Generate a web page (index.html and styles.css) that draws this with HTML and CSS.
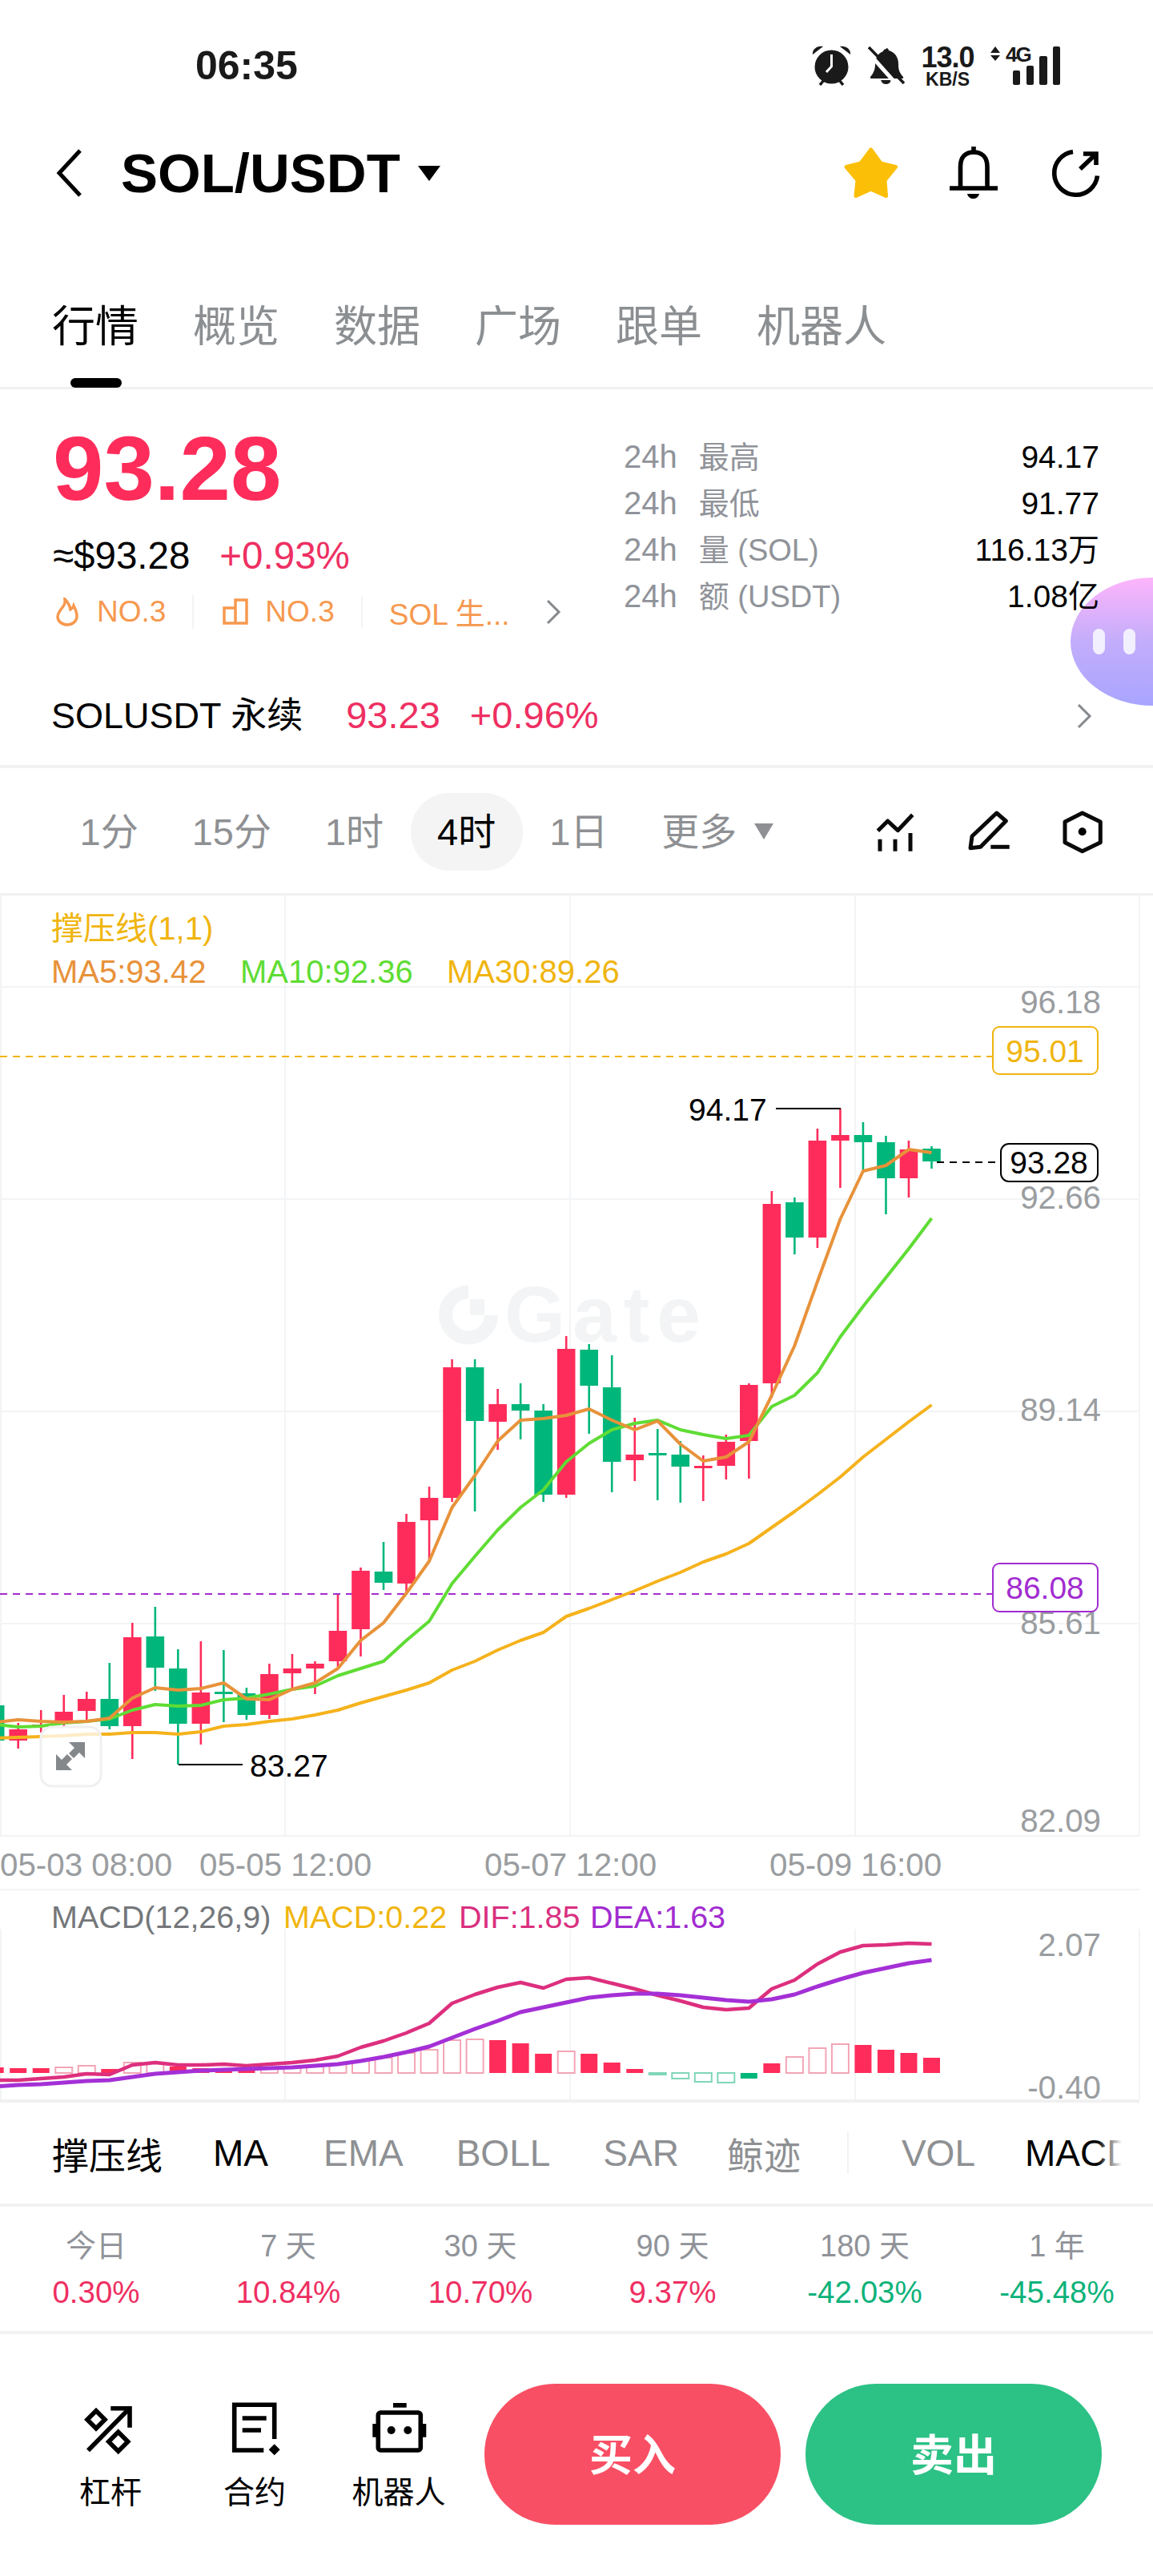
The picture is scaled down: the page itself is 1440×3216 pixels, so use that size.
FILE: index.html
```html
<!DOCTYPE html>
<html lang="zh-CN">
<head>
  <meta charset="UTF-8">
  <title>SOL/USDT</title>
  <link rel="stylesheet" href="styles.css">
</head>
<body>
  <div class="status">
    <span class="clock">06:35</span>
    <div class="status-icons">
      <svg width="52" height="50" viewBox="0 0 52 50" class="ink">
        <path d="M1 11 C0 5 6 0 14 1 Z M48 11 C49 5 43 0 35 1 Z"/>
        <circle cx="24.5" cy="26.5" r="21"/>
        <path class="ic-stroke" d="M10 49 L15 43 M39 49 L34 43"/>
        <path class="ic-white" d="M24.5 11 V26 L18 33"/>
      </svg>
      <svg width="46" height="50" viewBox="0 0 46 50" class="ink">
        <path d="M23 3 c1.5 0 3 1.5 3 3 c8 2 12 9 12 17 c0 7 1 10 6 16 c.5 1 0 2 -1 2 H4 c-1 0-1.5-1-1-2 c4-5 6-9 6-16 c0-7 3-13 10-16 c0-1.5 2-3 4-3 Z"/>
        <path d="M16 43 h13 c-1 3-3 5-6.5 5 s-5.500-2-6.500-5Z"/>
        <path class="ic-gap" d="M-2 6 L40 53"/>
        <path class="ic-stroke" d="M1 2 L45 47"/>
      </svg>
      <div class="speed"><b>13.0</b><span>KB/S</span></div>
      <svg class="net ink" width="88" height="50" viewBox="0 0 88 50">
        <path d="M6 1 l6 8 H0Z M6 19 l6-7 H0Z"/>
        <text x="19" y="20" class="net-text">4G</text>
        <rect x="28" y="31" width="9" height="18" rx="2"/>
        <rect x="45" y="25" width="9" height="24" rx="2"/>
        <rect x="61" y="13" width="10" height="36" rx="2"/>
        <rect x="78" y="1" width="9" height="48" rx="2"/>
      </svg>
    </div>
  </div>

  <div class="header">
    <svg class="back" width="36" height="60" viewBox="0 0 36 60"><path d="M31 2 L5 30 L31 58"/></svg>
    <h1>SOL/USDT</h1>
    <span class="caret"></span>
    <div class="header-icons">
      <svg width="70" height="66" viewBox="0 0 70 66"><path class="star" d="M34.700 4 L47 21 L65.500 25.500 L52 42 L53.500 61.500 L34.700 53 L16 61.500 L18 42 L4 25.500 L22 21 Z"/></svg>
      <svg width="66" height="68" viewBox="0 0 66 68">
        <path class="line" d="M14.500 51 V26 C14.500 14 21 8 31 8 C41 8 48 14 48 26 V51"/>
        <path class="line" d="M1 53 H61 M31 1 V8"/>
        <path d="M23 60 H38 C37 64 34 66 30.500 66 C27 66 24 64 23 60 Z"/>
      </svg>
      <svg width="62" height="64" viewBox="0 0 62 64">
        <path class="line" d="M27 5.500 A27 27 0 1 0 57.500 35.500"/>
        <path class="line" d="M40 8 H56 V22 M56 8 L36 27"/>
      </svg>
    </div>
  </div>

  <div class="tabs">
    <span class="tab active">行情</span>
    <span class="tab">概览</span>
    <span class="tab">数据</span>
    <span class="tab">广场</span>
    <span class="tab">跟单</span>
    <span class="tab">机器人</span>
  </div>

  <div class="quote">
    <div class="quote-left">
      <div class="last">93.28</div>
      <div class="fiat"><span>≈$93.28</span><span class="red">+0.93%</span></div>
      <div class="tags">
        <div class="tag">
          <svg width="28" height="36" viewBox="0 0 28 36"><path d="M11 2 C12 8 9 11 6 15 C3 19 2 21 2 24 C2 30 8 34 14 34 C20 34 26 30 26 23 C26 18 24 14 22 10 C21 13 20 14 18 15 C17 10 14 5 11 2 Z"/></svg>
          <span>NO.3</span>
        </div>
        <div class="tag tag-rank">
          <svg width="32" height="36" viewBox="0 0 32 36"><path d="M2 13 H16 V32 H2 Z M16 32 H30 V3 H16 V13"/></svg>
          <span>NO.3</span>
        </div>
        <div class="tag tag-last"><span>SOL 生...</span></div>
        <svg class="chev" width="20" height="32" viewBox="0 0 20 32"><path d="M3 2 L17 16 L3 30"/></svg>
      </div>
    </div>
    <div class="stats">
      <div class="stat"><span><em>24h</em>最高</span><b>94.17</b></div>
      <div class="stat"><span><em>24h</em>最低</span><b>91.77</b></div>
      <div class="stat"><span><em>24h</em>量 (SOL)</span><b>116.13万</b></div>
      <div class="stat"><span><em>24h</em>额 (USDT)</span><b>1.08亿</b></div>
    </div>
    <div class="assistant"><i></i><i></i></div>
  </div>

  <div class="perp">
    <span class="perp-name">SOLUSDT 永续</span>
    <span class="red perp-price">93.23</span>
    <span class="red perp-change">+0.96%</span>
    <svg class="chev" width="20" height="32" viewBox="0 0 20 32"><path d="M3 2 L17 16 L3 30"/></svg>
  </div>

  <div class="periods">
    <span class="period">1分</span>
    <span class="period">15分</span>
    <span class="period">1时</span>
    <span class="period on">4时</span>
    <span class="period">1日</span>
    <span class="period more">更多<i class="caret grey"></i></span>
    <div class="tools">
      <svg width="60" height="60" viewBox="0 0 60 60">
        <path class="thin" d="M8.300 29.300 L20.700 17 L33.300 28.700 L51.700 9.300"/>
        <path class="thin" d="M11 39.700 V54.700 M30 39.700 V54.700 M49 32 V54.700"/>
      </svg>
      <svg width="60" height="60" viewBox="0 0 60 60">
        <path class="thin" d="M39.700 7 L51.300 17 L19.700 49.300 L7 50.700 L9 36 Z"/>
        <path class="thin" d="M32.300 49.300 H55.700"/>
      </svg>
      <svg width="60" height="60" viewBox="0 0 60 60">
        <path class="thin" d="M29.700 7 L52.300 18 V43.700 L29.700 54.700 L8 43.700 V18 Z"/>
        <circle cx="29.700" cy="30.300" r="5"/>
      </svg>
    </div>
  </div>

  <svg class="chart" width="1440" height="1507" viewBox="0 1118 1440 1507">
    <path class="grid" d="M1 1118 V2292 M356 1118 V2292 M712 1118 V2292 M1068 1118 V2292 M1423 1118 V2292 M0 1232 H1423 M0 1497 H1423 M0 1762 H1423 M0 2027 H1423 M0 2292 H1423"/>
    <path class="grid" d="M1 2408 V2622 M356 2408 V2622 M712 2408 V2622 M1068 2408 V2622 M1423 2408 V2622 M0 2359 H1423"/>
    <path class="grid-bold" d="M0 2623 H1423"/>

    <path class="mark-ring" d="M585 1613 A28.500 28.500 0 1 0 613.500 1642"/>
    <rect class="mark-square" x="587" y="1622" width="18" height="20"/>
    <text class="mark" x="630" y="1675">Gate</text>

    <path class="dash-yellow" d="M0 1319 H1240"/>
    <path class="dash-purple" d="M0 1990 H1240"/>

    <g id="candles"></g>
    <g id="lines"></g>
    <g id="bars"></g>

    <text class="lbl yellow" x="64" y="1173">撑压线(1,1)</text>
    <text class="lbl orange" x="64" y="1227">MA5:93.42</text>
    <text class="lbl green-ma" x="300" y="1227">MA10:92.36</text>
    <text class="lbl yellow" x="558" y="1227">MA30:89.26</text>

    <text class="lbl axis end" x="1375" y="1265">96.18</text>
    <text class="lbl axis end" x="1375" y="1509">92.66</text>
    <text class="lbl axis end" x="1375" y="1774">89.14</text>
    <text class="lbl axis end" x="1375" y="2040">85.61</text>
    <text class="lbl axis end" x="1375" y="2287">82.09</text>

    <rect class="box-yellow" x="1240" y="1282" width="131" height="59" rx="8"/>
    <text class="lbl tip yellow mid" x="1305" y="1326">95.01</text>

    <rect class="box-purple" x="1240" y="1952" width="131" height="60" rx="8"/>
    <text class="lbl tip purple mid" x="1305" y="1996">86.08</text>

    <path class="dash-black" d="M1170 1451 H1248"/>
    <rect class="box-black" x="1250" y="1428" width="121" height="47" rx="10"/>
    <text class="lbl tip mid" x="1310" y="1465">93.28</text>

    <path class="leader" d="M969 1384 H1050"/>
    <text class="lbl tip" x="860" y="1399">94.17</text>
    <path class="leader" d="M223 2203 H303"/>
    <text class="lbl tip" x="312" y="2218">83.27</text>

    <rect class="expand" x="51" y="2156" width="75" height="74" rx="14"/>
    <path class="expand-arrow" d="M70 2210 V2190 L77 2197 L84 2190 L90 2196 L83 2203 L90 2210 Z M106 2175 V2195 L99 2188 L92 2195 L86 2189 L93 2182 L86 2175 Z"/>

    <text class="lbl axis" x="0" y="2342">05-03 08:00</text>
    <text class="lbl axis" x="249" y="2342">05-05 12:00</text>
    <text class="lbl axis" x="605" y="2342">05-07 12:00</text>
    <text class="lbl axis" x="961" y="2342">05-09 16:00</text>

    <text class="lbl small macd-name" x="64" y="2407">MACD(12,26,9)</text>
    <text class="lbl small yellow" x="354" y="2407">MACD:0.22</text>
    <text class="lbl small pink" x="573" y="2407">DIF:1.85</text>
    <text class="lbl small purple" x="737" y="2407">DEA:1.63</text>
    <text class="lbl axis end" x="1375" y="2442">2.07</text>
    <text class="lbl axis end" x="1375" y="2620">-0.40</text>
  </svg>

  <div class="indicators">
    <span class="on">撑压线</span>
    <span class="on ma-tab">MA</span>
    <span>EMA</span>
    <span>BOLL</span>
    <span class="sar-tab">SAR</span>
    <span>鲸迹</span>
    <i class="sep"></i>
    <span>VOL</span>
    <span class="on macd-tab">MACD</span>
  </div>

  <div class="returns">
    <div class="ret"><span>今日</span><b class="red">0.30%</b></div>
    <div class="ret"><span>7 天</span><b class="red">10.84%</b></div>
    <div class="ret"><span>30 天</span><b class="red">10.70%</b></div>
    <div class="ret"><span>90 天</span><b class="red">9.37%</b></div>
    <div class="ret"><span>180 天</span><b class="green">-42.03%</b></div>
    <div class="ret"><span>1 年</span><b class="green">-45.48%</b></div>
  </div>

  <div class="actions">
    <div class="act">
      <svg width="70" height="70" viewBox="0 0 70 70">
        <path class="line" d="M7 61.300 L58.700 8.700"/>
        <path class="line" d="M35.300 8.700 H59 V32.700"/>
        <path class="line" d="M17 11.700 L28 22.700 L17 33.700 L6 22.700 Z M44.700 38.300 L56.700 50.300 L44.700 62.300 L32.700 50.300 Z"/>
      </svg>
      <span>杠杆</span>
    </div>
    <div class="act">
      <svg width="70" height="70" viewBox="0 0 70 70">
        <path class="line" d="M59.700 47 V4.300 H9.700 V61 H46.300"/>
        <path class="line" d="M19.700 21 H49.700 M19.700 36 H43"/>
        <path d="M59.700 53.300 L66.700 60.300 L59.700 67.300 L52.700 60.300 Z"/>
      </svg>
      <span>合约</span>
    </div>
    <div class="act">
      <svg width="70" height="70" viewBox="0 0 70 70">
        <rect x="28" y="2" width="16.700" height="5.700"/>
        <rect class="line" x="9.300" y="14" width="53" height="47" rx="3"/>
        <rect x="2.300" y="28" width="5" height="16.700"/>
        <rect x="64.300" y="28" width="5" height="16.700"/>
        <circle cx="25.700" cy="36" r="5"/>
        <circle cx="46.300" cy="36" r="5"/>
      </svg>
      <span>机器人</span>
    </div>
    <button class="trade buy">买入</button>
    <button class="trade sell">卖出</button>
  </div>

  <script src="chart.js"></script>
</body>
</html>
```

FILE: styles.css
```css
* {
  box-sizing: border-box;
}

body {
  margin: 0;
  width: 1440px;
  height: 3216px;
  overflow: hidden;
  background: #fff;
  color: #000;
  font-family: "Liberation Sans", "Noto Sans CJK SC", sans-serif;
}

.red { color: #ee2f62; }
.green { color: #0db27a; }

svg .line {
  fill: none;
  stroke: #000;
  stroke-width: 5.6;
}

svg .thin {
  fill: none;
  stroke: #0a0a0a;
  stroke-width: 5;
  stroke-linejoin: round;
}

/* status bar */
.status {
  height: 164px;
  display: flex;
  align-items: center;
  justify-content: space-between;
  padding: 0 115px 0 244px;
}

.clock {
  font-size: 50px;
  font-weight: 700;
  color: #1a1a1a;
}

.status-icons {
  display: flex;
  align-items: center;
  gap: 18px;
}

.ink { fill: #1a1a1a; }

.net { overflow: visible; }

.ic-stroke {
  fill: none;
  stroke: #1a1a1a;
  stroke-width: 3.5;
}

.ic-white {
  fill: none;
  stroke: #fff;
  stroke-width: 3;
}

.ic-gap {
  fill: none;
  stroke: #fff;
  stroke-width: 5;
}

.speed {
  display: flex;
  flex-direction: column;
  align-items: center;
  width: 71px;
  font-weight: 700;
  line-height: 1;
  color: #1a1a1a;
}

.speed b { font-size: 36px; letter-spacing: -1px; }
.speed span { font-size: 23px; margin-top: -2px; }

.net-text {
  font-size: 26px;
  font-weight: 700;
  letter-spacing: -2px;
}

/* header */
.header {
  height: 104px;
  display: flex;
  align-items: center;
  padding-left: 69px;
}

.back path {
  fill: none;
  stroke: #000;
  stroke-width: 5;
}

.header h1 {
  margin: 0 0 0 46px;
  font-size: 69px;
  font-weight: 700;
}

.caret {
  display: inline-block;
  margin-left: 22px;
  border-left: 14px solid transparent;
  border-right: 14px solid transparent;
  border-top: 19px solid #000;
}

.caret.grey {
  margin-left: 22px;
  border-left-width: 12px;
  border-right-width: 12px;
  border-top: 20px solid #8e9093;
  vertical-align: 7px;
}

.header-icons {
  margin-left: auto;
  padding-right: 65px;
  display: flex;
  align-items: center;
  gap: 62px;
}

.star {
  fill: #fbbf07;
  stroke: #fbbf07;
  stroke-width: 5;
  stroke-linejoin: round;
}

/* tabs */
.tabs {
  height: 218px;
  padding: 104px 0 0 65px;
  display: flex;
  gap: 68px;
  border-bottom: 3px solid #f1f1f2;
}

.tab {
  position: relative;
  font-size: 54px;
  line-height: 72px;
  color: #8c8f92;
}

.tab.active {
  color: #000;
}

.tab.active::after {
  content: "";
  position: absolute;
  left: 23px;
  top: 100px;
  width: 64px;
  height: 12px;
  border-radius: 6px;
  background: #000;
}

/* quote */
.quote {
  position: relative;
  height: 357px;
  display: flex;
}

.quote-left {
  width: 779px;
  padding: 39px 0 0 66px;
}

.last {
  font-size: 114px;
  font-weight: 700;
  line-height: 120px;
  color: #fe2c5a;
}

.fiat {
  margin-top: 19px;
  display: flex;
  gap: 37px;
  font-size: 47.500px;
  line-height: 60px;
}

.tags {
  margin-top: 15px;
  height: 50px;
  padding-left: 4px;
  display: flex;
  align-items: center;
  font-size: 37px;
  color: #f6994f;
}

.tag {
  display: flex;
  align-items: center;
  gap: 23px;
  padding-right: 33px;
  margin-right: 36px;
  border-right: 2px solid #f4f4f4;
}

.tag-rank {
  gap: 21px;
  margin-right: 33px;
}

.tag-last {
  border-right: 0;
  margin-right: 0;
  padding-right: 44px;
}

.tag svg path {
  fill: none;
  stroke: #f6994f;
  stroke-width: 3.5;
}

.chev path {
  fill: none;
  stroke: #85888c;
  stroke-width: 3;
}

.stats {
  position: relative;
  z-index: 1;
  width: 594px;
  padding-top: 55px;
}

.stat {
  height: 58px;
  display: flex;
  justify-content: space-between;
  align-items: baseline;
  font-size: 38px;
  line-height: 58px;
  color: #909399;
}

.stat em {
  margin-right: 27px;
  font-size: 40px;
  font-style: normal;
}

.stat b {
  font-size: 39px;
  font-weight: 400;
  color: #000;
}

.assistant {
  position: absolute;
  right: 0;
  top: 235px;
  width: 103px;
  height: 160px;
  padding-left: 28px;
  display: flex;
  align-items: center;
  gap: 23px;
  border-radius: 100% 0 0 100% / 50% 0 0 50%;
  background: linear-gradient(180deg, #fdb5fb 0%, #c3adfb 50%, #a8a5ff 100%);
}

.assistant i {
  width: 15px;
  height: 32px;
  border-radius: 8px;
  background: #f2efff;
}

/* perpetual row */
.perp {
  height: 116px;
  padding: 20px 76px 0 64px;
  display: flex;
  align-items: baseline;
  font-size: 45px;
  line-height: 60px;
  border-bottom: 4px solid #f2f2f3;
}

.perp-name { margin-right: 54px; }

.perp-price {
  margin-right: 37px;
  font-size: 47px;
}

.perp-change { font-size: 47px; }

.perp .chev {
  margin-left: auto;
  align-self: flex-start;
  margin-top: 15px;
}

/* period selector */
.periods {
  height: 159px;
  padding: 2px 58px 0 66px;
  display: flex;
  align-items: center;
  border-bottom: 3px solid #f1f1f2;
  font-size: 47px;
  color: #8e9093;
}

.period {
  height: 97px;
  padding: 0 33.500px;
  line-height: 97px;
}

.period.on {
  color: #000;
  background: #f4f4f5;
  border-radius: 48px;
}

.tools {
  margin-left: auto;
  display: flex;
  gap: 57px;
}

/* chart */
.chart {
  display: block;
  overflow: visible;
}

.grid {
  fill: none;
  stroke: #f3f4f5;
  stroke-width: 2;
}

.grid-bold {
  fill: none;
  stroke: #f1f1f2;
  stroke-width: 4;
}

.mark {
  font-size: 98px;
  font-weight: 700;
  letter-spacing: 9px;
  fill: #f3f4f5;
}

.mark-ring {
  fill: none;
  stroke: #f3f4f5;
  stroke-width: 17;
}

.mark-square { fill: #f3f4f5; }

.lbl {
  font-size: 40px;
  fill: #000;
}

.lbl.tip { font-size: 39px; }
.lbl.small { font-size: 39.500px; }
.lbl.end { text-anchor: end; }
.lbl.mid { text-anchor: middle; }
.lbl.axis { fill: #9a9da0; font-size: 40.300px; }
.lbl.yellow { fill: #f0b50f; }
.lbl.orange { fill: #e8923a; }
.lbl.green-ma { fill: #5fdc34; }
.lbl.pink { fill: #d9307f; }
.lbl.purple { fill: #a22cd0; }
.lbl.macd-name { fill: #74777a; }

.dash-yellow,
.dash-purple,
.dash-black {
  fill: none;
  stroke-width: 2;
  stroke-dasharray: 9 7;
}

.dash-yellow { stroke: #f0b50f; }
.dash-purple { stroke: #a22cd0; }
.dash-black { stroke: #000; }

.box-yellow,
.box-purple,
.box-black {
  fill: #fff;
  stroke-width: 2;
}

.box-yellow { stroke: #f0b50f; }
.box-purple { stroke: #a22cd0; }
.box-black { stroke: #000; }

.leader {
  fill: none;
  stroke: #000;
  stroke-width: 2;
}

.expand {
  fill: rgba(255, 255, 255, 0.75);
  stroke: #f0f0f1;
  stroke-width: 3;
}

.expand-arrow {
  fill: #85888b;
}

.up { fill: #fe2c5a; }
.down { fill: #00b67a; }
.wick-up { stroke: #fe2c5a; stroke-width: 2.6; }
.wick-down { stroke: #00b67a; stroke-width: 2.6; }

.ma {
  fill: none;
  stroke-width: 4;
  stroke-linejoin: round;
}

.ma5 { stroke: #e8923a; }
.ma10 { stroke: #5fdc34; }
.ma30 { stroke: #f5b21c; }
.dif { stroke: #dd2f7e; stroke-width: 4.5; }
.dea { stroke: #a430d6; stroke-width: 5; }

.hollow-up { fill: #fff; stroke: #f3a5b6; stroke-width: 2; }
.hollow-down { fill: #fff; stroke: #7fd6b8; stroke-width: 2; }

/* indicator tabs */
.indicators {
  position: relative;
  height: 130px;
  padding-left: 65px;
  display: flex;
  align-items: center;
  gap: 66px;
  overflow: hidden;
  white-space: nowrap;
  font-size: 46px;
  color: #8e9093;
  border-bottom: 4px solid #f2f2f3;
}

.indicators .on { color: #000; }
.indicators .ma-tab { margin: 0 3px 0 -3px; }
.indicators .sar-tab { margin-right: -6px; }
.indicators .macd-tab { margin-left: -4px; }

.indicators .sep {
  width: 2px;
  height: 52px;
  margin-left: -8px;
  background: #f2f2f3;
}

.indicators::after {
  content: "";
  position: absolute;
  right: 0;
  top: 0;
  bottom: 0;
  width: 70px;
  background: linear-gradient(90deg, rgba(255, 255, 255, 0) 0, #fff 45%);
}

/* returns */
.returns {
  height: 159px;
  padding-top: 24px;
  display: grid;
  grid-template-columns: repeat(6, 1fr);
  border-bottom: 4px solid #f2f2f3;
}

.ret {
  display: flex;
  flex-direction: column;
  align-items: center;
  font-size: 38px;
  line-height: 50px;
  color: #909399;
}

.ret b {
  margin-top: 8px;
  font-size: 38.500px;
  font-weight: 400;
}

.ret b.red { color: #ee2f62; }
.ret b.green { color: #0db27a; }

/* bottom actions */
.actions {
  padding: 62px 0 0 48px;
  display: flex;
  align-items: flex-start;
}

.act {
  width: 180px;
  margin-top: 22px;
  display: flex;
  flex-direction: column;
  align-items: center;
  font-size: 39px;
  line-height: 50px;
}

.act svg { margin-bottom: 19px; }

.trade {
  width: 370px;
  height: 176px;
  padding: 0 0 6px;
  border: 0;
  border-radius: 88px;
  color: #fff;
  font-family: inherit;
  font-size: 54px;
  font-weight: 700;
}

.buy {
  margin-left: 17px;
  background: #f94f64;
}

.sell {
  margin-left: 31px;
  background: #2cc185;
}
```

FILE: chart.js
```js
const svgNS = 'http://www.w3.org/2000/svg';

// newest candle first: [wick top, body top, body bottom, wick bottom, up?] in chart px
const candles = [
  [1431, 1434, 1450, 1459, 0], [1424, 1435, 1471, 1495, 1], [1418, 1426, 1471, 1516, 0],
  [1401, 1417, 1426, 1464, 0], [1384, 1417, 1424, 1483, 1], [1409, 1424, 1545, 1558, 1],
  [1495, 1501, 1545, 1566, 0], [1487, 1503, 1727, 1745, 1], [1727, 1729, 1799, 1846, 1],
  [1791, 1800, 1830, 1847, 1], [1817, 1830, 1833, 1874, 1], [1799, 1816, 1831, 1876, 0],
  [1784, 1814, 1816, 1873, 0], [1770, 1816, 1823, 1849, 1], [1692, 1732, 1825, 1863, 0],
  [1678, 1685, 1730, 1790, 0], [1668, 1684, 1866, 1870, 1], [1753, 1761, 1866, 1875, 0],
  [1727, 1753, 1761, 1797, 0], [1734, 1753, 1775, 1810, 1], [1697, 1707, 1774, 1887, 0],
  [1697, 1707, 1870, 1875, 1], [1856, 1870, 1898, 1949, 1], [1890, 1900, 1977, 1991, 1],
  [1925, 1962, 1976, 1985, 0], [1957, 1961, 2034, 2068, 1], [1991, 2036, 2074, 2081, 1],
  [2074, 2077, 2083, 2115, 1], [2065, 2083, 2089, 2111, 1], [2077, 2090, 2141, 2146, 1],
  [2107, 2114, 2141, 2147, 0], [2060, 2112, 2114, 2150, 0], [2049, 2113, 2152, 2178, 1],
  [2059, 2083, 2152, 2203, 0], [2006, 2043, 2082, 2111, 0], [2026, 2044, 2155, 2196, 1],
  [2076, 2121, 2155, 2159, 0], [2112, 2121, 2136, 2151, 1], [2116, 2137, 2151, 2155, 1],
  [2135, 2153, 2155, 2163, 1], [2151, 2159, 2173, 2183, 1], [2129, 2129, 2173, 2173, 0]
];

const ma5 = [1439, 1435, 1455, 1462, 1522, 1600, 1680, 1742, 1800, 1819, 1824, 1803, 1774, 1785, 1773, 1759,
  1767, 1771, 1773, 1799, 1842, 1882, 1949, 1989, 2026, 2048, 2083, 2101, 2109, 2122, 2121, 2101, 2108, 2110,
  2107, 2120, 2145, 2149, 2150, 2149, 2147, 2150];
const ma10 = [1521, 1559, 1595, 1631, 1669, 1714, 1742, 1756, 1792, 1796, 1791, 1785, 1773, 1777, 1785, 1802,
  1825, 1860, 1882, 1910, 1943, 1977, 2024, 2048, 2074, 2083, 2092, 2105, 2109, 2115, 2120, 2122, 2129, 2130,
  2128, 2135, 2146, 2149, 2151, 2155, 2156, 2153];
const ma30 = [1754, 1775, 1797, 1819, 1844, 1866, 1887, 1907, 1927, 1940, 1950, 1963, 1974, 1986, 1997, 2008,
  2018, 2038, 2048, 2060, 2074, 2085, 2101, 2110, 2118, 2126, 2135, 2141, 2146, 2149, 2153, 2155, 2162, 2165,
  2163, 2163, 2165, 2165, 2167, 2168, 2169, 2170];
const dif = [2427, 2426, 2428, 2429, 2437, 2452, 2472, 2483, 2507, 2509, 2506, 2498, 2491, 2483, 2476, 2469,
  2471, 2482, 2475, 2481, 2490, 2501, 2526, 2538, 2548, 2556, 2567, 2572, 2575, 2577, 2579, 2577, 2578, 2578,
  2575, 2578, 2590, 2589, 2593, 2595, 2597, 2597];
const dea = [2447, 2451, 2457, 2463, 2471, 2480, 2490, 2496, 2499, 2497, 2494, 2491, 2489, 2489, 2491, 2494,
  2500, 2506, 2512, 2523, 2533, 2544, 2555, 2562, 2568, 2573, 2577, 2579, 2581, 2582, 2583, 2584, 2585, 2587,
  2589, 2593, 2597, 2598, 2600, 2602, 2603, 2605];

// histogram: [end y, hollow?] measured from the zero line
const zero = 2588;
const hist = [
  [2569, 0], [2563, 0], [2559, 0], [2553, 0], [2552, 1], [2557, 1], [2568, 1], [2576, 0], [2595, 0], [2600, 1],
  [2599, 1], [2595, 1], [2590, 1], [2583, 0], [2575, 0], [2564, 0], [2561, 1], [2564, 0], [2551, 0], [2547, 0],
  [2546, 1], [2547, 1], [2559, 1], [2563, 1], [2569, 1], [2573, 1], [2577, 1], [2580, 1], [2581, 1], [2582, 1],
  [2583, 0], [2583, 0], [2582, 0], [2580, 0], [2575, 1], [2575, 1], [2583, 0], [2579, 1], [2581, 1], [2582, 0],
  [2582, 0], [2581, 0]
];

const xOf = i => 1163.5 - 28.52 * i;

function add(parent, tag, attrs) {
  const el = document.createElementNS(svgNS, tag);
  Object.keys(attrs).forEach(k => el.setAttribute(k, attrs[k]));
  parent.appendChild(el);
}

const candleLayer = document.getElementById('candles');
candles.forEach((c, i) => {
  const x = xOf(i);
  const up = c[4] === 1;
  add(candleLayer, 'line', { x1: x, x2: x, y1: c[0], y2: c[3], class: up ? 'wick-up' : 'wick-down' });
  add(candleLayer, 'rect', { x: x - 11.3, y: c[1], width: 22.6, height: Math.max(c[2] - c[1], 3), class: up ? 'up' : 'down' });
});

const barLayer = document.getElementById('bars');
hist.forEach((h, i) => {
  const x = xOf(i) - 10.5;
  const top = Math.min(h[0], zero);
  const height = Math.abs(h[0] - zero);
  const up = h[0] < zero;
  const cls = h[1] ? (up ? 'hollow-up' : 'hollow-down') : (up ? 'up' : 'down');
  add(barLayer, 'rect', { x: x, y: top, width: 21, height: height, class: cls });
});

const lineLayer = document.getElementById('lines');
[[ma30, 'ma30'], [ma10, 'ma10'], [ma5, 'ma5']].forEach(([ys, cls]) => {
  const pts = ys.map((y, i) => `${xOf(i)},${y}`).join(' ');
  add(lineLayer, 'polyline', { points: pts, class: 'ma ' + cls });
});

[[dif, 'dif'], [dea, 'dea']].forEach(([ys, cls]) => {
  const pts = ys.map((y, i) => `${xOf(i)},${y}`).join(' ');
  add(barLayer, 'polyline', { points: pts, class: 'ma ' + cls });
});
```
